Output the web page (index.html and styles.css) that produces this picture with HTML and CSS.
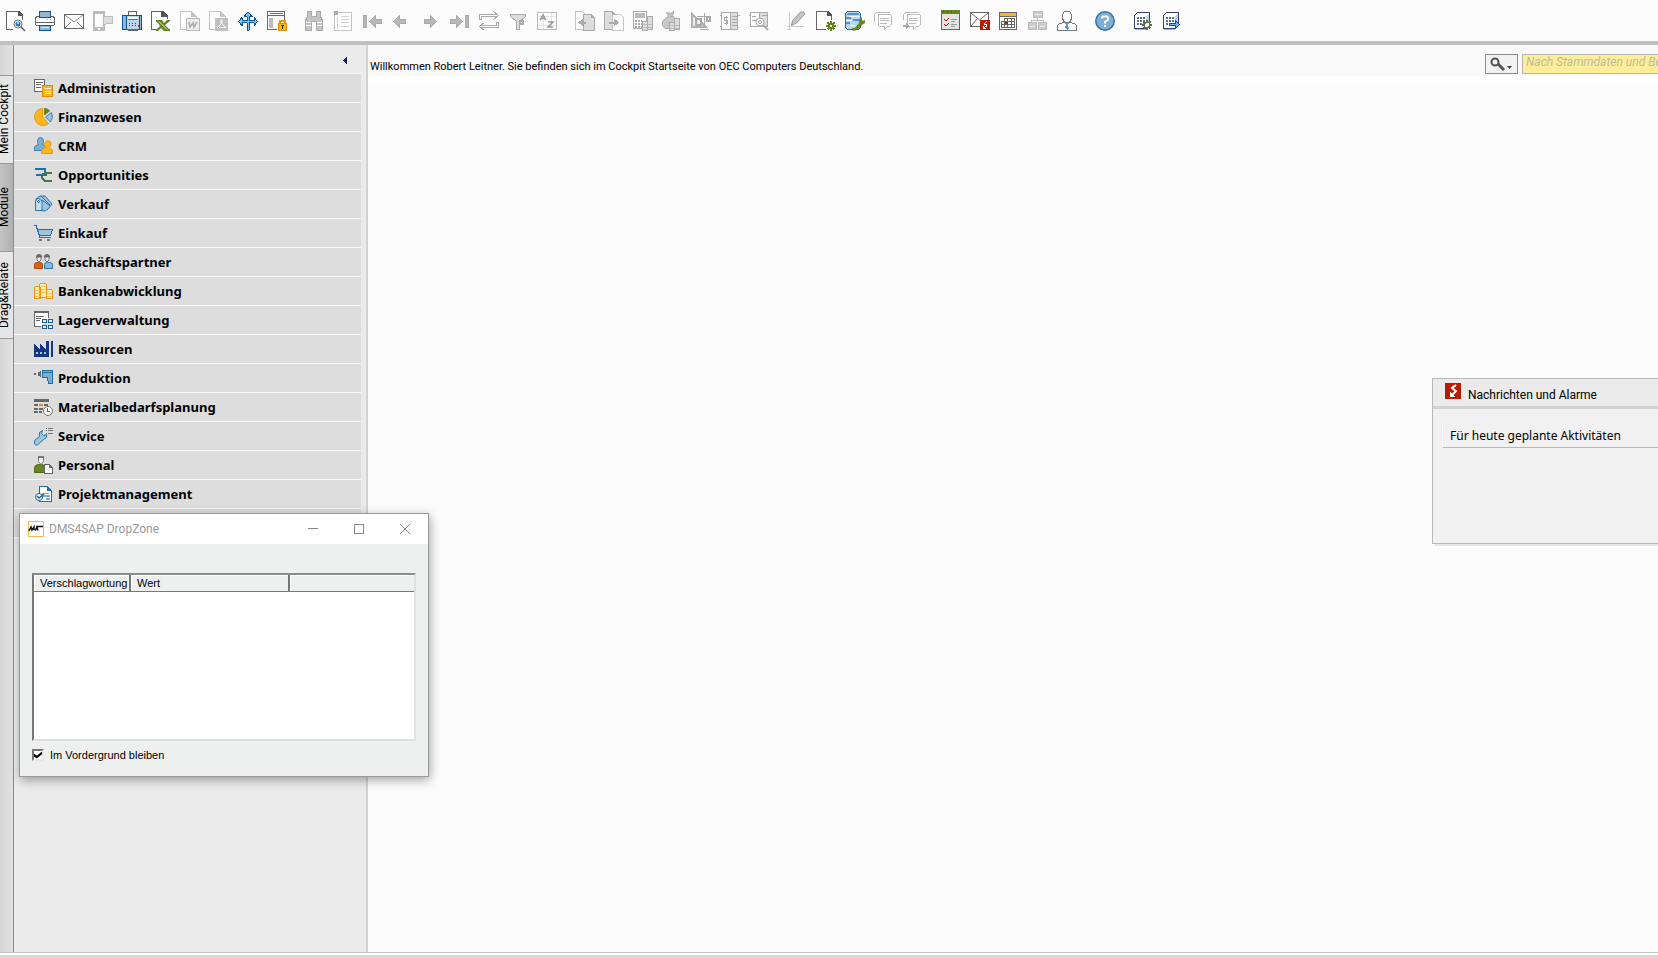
FILE: index.html
```
<!DOCTYPE html>
<html lang="de">
<head>
<meta charset="utf-8">
<title>OEC Computers Deutschland</title>
<link rel="stylesheet" href="styles.css">
</head>
<body>
<header class="toolbar" role="toolbar" aria-label="Werkzeugleiste">
  <div class="group">
    <button class="tool" aria-label="Vorschau"><svg viewBox="0 0 20 20"><path fill="#fff" stroke="#666" d="M7 18.500H.5V.5h12l4 4V9"/><path fill="#555" d="M12 0v5h5V4l-4-4z"/><circle class="smooth" cx="12" cy="13" r="4" fill="#fff" stroke="#777"/><circle class="smooth" cx="12" cy="13" r="2.500" fill="#1f78c0"/><path fill="#9fd0f2" d="M11 11h2v2h-2z"/><path class="smooth" stroke="#555" stroke-width="1.500" d="M15 16l4 4"/></svg></button>
    <button class="tool" aria-label="Drucken"><svg viewBox="0 0 20 20"><path fill="#fff" stroke="#666" d="M1.500 5.500h17l1 2v6l-1 1h-17l-1-1v-6z"/><path stroke="#666" d="M1 11.500h18"/><path fill="#8fb8d8" stroke="#0b5795" d="M4.500.5h11v6h-11zM4.500 14.500h11v5h-11z"/><path stroke="#b9936c" stroke-dasharray="1 2" d="M12 8.500h6"/><path stroke="#cfe3f1" d="M6 16.500h8"/></svg></button>
    <button class="tool" aria-label="E-Mail"><svg viewBox="0 0 20 20"><path fill="#fff" stroke="#666" d="M.5 3.500h19v14H.5z"/><path class="smooth" fill="none" stroke="#888" d="M1 4l9 7 9-7M1 17l6-6M19 17l-6-6"/></svg></button>
    <button class="tool" aria-label="SMS"><svg viewBox="0 0 20 20"><path fill="#fff" stroke="#bbb" stroke-width="2" d="M1 1h10v18H1z"/><path fill="#bbb" d="M0 0h12v3H0zM0 16h12v4H0z"/><path fill="#fff" d="M5 17h2v2H5z"/><path fill="#ddd" stroke="#bbb" d="M10.500 5.500h9v7h-6l-3 2z"/></svg></button>
    <button class="tool" aria-label="Fax"><svg viewBox="0 0 20 20"><path fill="#8fb8d8" stroke="#0b5795" d="M.5 4.500h19v14H.5z"/><path fill="#fff" stroke="#666" d="M6.500.5h8v4h-8z"/><path fill="#b9d6ea" stroke="#0b5795" d="M4.500 4.500h13v14h-13z"/><path fill="#fff" d="M6 6h10v3H6z"/><path stroke="#3d80b3" d="M6 8.500h10"/><path stroke="#0b5795" stroke-dasharray="1 2" d="M7 12.500h9M7 14.500h8"/><path fill="#c33" d="M16 14h1v2h-1z"/><path fill="#fff" stroke="#666" d="M6 18.500h9v1H6z"/></svg></button>
    <button class="tool" aria-label="Excel-Export"><svg viewBox="0 0 20 20"><path fill="#fff" stroke="#666" d="M7 18.500H.5V.5h11l5 5V8"/><path fill="#555" d="M10 0v6h7V5l-5-5z"/><path class="smooth" fill="#66851c" d="M5 9h6l2 3 3-3h3v1l-5 4 4 4h1v2h-6l-3-3-3 3H5v-1l4-4-3-4H5z"/><path class="smooth" stroke="#e6efc4" d="M8 10.500l8 8"/></svg></button>
    <button class="tool" aria-label="Word-Export"><svg viewBox="0 0 20 20"><path fill="#fff" stroke="#c4c4c4" d="M6 18.500H.5V.5h11l5 5V8"/><path fill="#c4c4c4" d="M11 0v6h6V5z"/><path fill="#ececec" stroke="#b8b8b8" d="M6.500 7.500h13v12h-13z"/><path class="smooth" fill="none" stroke="#aaa" stroke-width="1.500" d="M9 11l1 5 3-4 1 4 3-5"/></svg></button>
    <button class="tool" aria-label="PDF-Export"><svg viewBox="0 0 20 20"><path fill="#fff" stroke="#c4c4c4" d="M6 18.500H.5V.5h11l5 5V8"/><path fill="#c4c4c4" d="M11 0v6h6V5z"/><path fill="#c0c0c0" d="M6 7h13v13H6z"/><path class="smooth" fill="none" stroke="#fff" d="M8 17l4-4V9h1v4l4 3.500h-7"/></svg></button>
    <button class="tool" aria-label="Anwendung starten"><svg viewBox="0 0 20 20"><path fill="#7fc0ee" stroke="#0b5795" stroke-linejoin="round" d="M10 1l4 4.500h-3v4h5V6.500l3.500 4-3.500 4v-3h-5v7.500H9v-7.500H4v3l-3.500-4L4 6.500v3h5v-4H6z"/></svg></button>
    <button class="tool" aria-label="Sperren"><svg viewBox="0 0 20 20"><path fill="#fff" stroke="#666" d="M10 18.500H.5V.5h17V9"/><path stroke="#666" d="M0 4.500h18M3 2.500h13"/><path fill="#bbb" d="M2 7h4v10H2z"/><path fill="none" stroke="#e59a17" stroke-width="2" d="M13 12v-2h5v2"/><path fill="#fbb61c" stroke="#e08c00" d="M11.500 12.500h8v7h-8z"/><path fill="#234" d="M14 14h3v1h-1v3h-1v-3h-1z"/></svg></button>
  </div>
  <div class="group">
    <button class="tool" aria-label="Suchen"><svg viewBox="0 0 20 20"><path fill="#c4c4c4" stroke="#aaa" d="M2.500.5h4v5h5v-5h4v5l2 4v10h-6v-9h-5v9h-6v-10l2-4z"/><path stroke="#fff" d="M1 11.500h5M12 11.500h5M1 14.500h5M12 14.500h5"/></svg></button>
    <button class="tool" aria-label="Formular"><svg viewBox="0 0 20 20"><path fill="#fff" stroke="#c4c4c4" d="M.5 1.500h17v18H.5z"/><path fill="#aaa" d="M0 0h4v4H0z"/><path stroke="#d0d0d0" d="M7 5.500h8M7 8.500h8M7 11.500h8M7 15.500h8M3.500 6v12"/></svg></button>
    <button class="tool" aria-label="Erster Datensatz"><svg viewBox="0 0 20 20"><path fill="#b8b8b8" stroke="#aaa" d="M.5 4.500h3v12h-3zM6.500 10.500l6-6v4h6v4h-6v4z"/></svg></button>
    <button class="tool" aria-label="Vorheriger Datensatz"><svg viewBox="0 0 20 20"><path fill="#b8b8b8" stroke="#aaa" d="M1.500 10.500l6-6v4h6v4h-6v4z"/></svg></button>
    <button class="tool" aria-label="Nächster Datensatz"><svg viewBox="0 0 20 20"><path fill="#b8b8b8" stroke="#aaa" d="M15.500 10.500l-6-6v4h-6v4h6v4z"/></svg></button>
    <button class="tool" aria-label="Letzter Datensatz"><svg viewBox="0 0 20 20"><path fill="#b8b8b8" stroke="#aaa" d="M15.500 4.500h3v12h-3zM12.500 10.500l-6-6v4h-6v4h6v4z"/></svg></button>
    <button class="tool" aria-label="Aktualisieren"><svg viewBox="0 0 20 20"><path fill="none" stroke="#aaa" d="M.5 8.500v-5h17M.5 8.500h2v-3h15M14.500.5l5 4-5 4M19.500 11.500v5h-17M19.500 11.500h-2v3h-15M5.500 11.500l-5 4 5 4"/></svg></button>
    <button class="tool" aria-label="Filter"><svg viewBox="0 0 20 20"><path fill="#ddd" stroke="#aaa" d="M2.500 3.500h15v2l-6 5v8h-3v-8l-6-5z"/><path fill="#eee" stroke="#aaa" stroke-width="1.500" d="M12 10h3v3h-3z"/></svg></button>
    <button class="tool" aria-label="Sortieren"><svg viewBox="0 0 20 20"><path fill="#fff" stroke="#bbb" d="M.5 1.500h19v17H.5z"/><path stroke="#e4e4e4" d="M1 5.500h18M1 14.500h18M6.500 2v16M14.500 2v16"/><path class="smooth" fill="none" stroke="#999" stroke-width="1.500" d="M3 9l3-5 3 5M4 7.500h4M11 11h5l-5 5h5"/></svg></button>
  </div>
  <div class="group">
    <button class="tool" aria-label="Basisbeleg"><svg viewBox="0 0 20 20"><path fill="#fff" stroke="#c4c4c4" d="M.5.500h7l3 3v15H.5z"/><path fill="#ddd" stroke="#aaa" d="M8.500 3.500h8l3 3v13h-11z"/><path fill="#aaa" d="M3 11.500l5-4v3h3v2H8v3zM16 3v4h4z"/></svg></button>
    <button class="tool" aria-label="Zielbeleg"><svg viewBox="0 0 20 20"><path fill="#ddd" stroke="#aaa" d="M.5.500h8l3 3v15H.5z"/><path fill="#fff" stroke="#c4c4c4" d="M8.500 3.500h8l3 3v13h-11z"/><path fill="#aaa" d="M15 11.500l-5-4v3H5v2h5v3zM8 0v4h4z"/></svg></button>
    <button class="tool" aria-label="Rohertrag"><svg viewBox="0 0 20 20"><path fill="#fff" stroke="#aaa" d="M.5.500h13v17H.5z"/><path fill="#bbb" d="M2 2h10v5H2z"/><path stroke="#aaa" stroke-width="2" stroke-dasharray="2 1" d="M2 10h7M2 13h7M2 16h7"/><path fill="#ddd" stroke="#aaa" d="M14.500 5.500h5v13h-5zM9.500 10.500h5v9h-5z"/><path stroke="#bbb" d="M10 13.500h9M10 16.500h9"/></svg></button>
    <button class="tool" aria-label="Zahlungsmittel"><svg viewBox="0 0 20 20"><path class="smooth" fill="#c8c8c8" stroke="#aaa" d="M4.500 1.500l4 1 3-2v3l-3 2h3l3 5v7H3l-2.500-3v-4l4-4 2-1z"/><path fill="#ddd" stroke="#aaa" d="M12.500 7.500h5v11h-5zM7.500 11.500h5v8h-5z"/><path stroke="#bbb" d="M8 14.500h9M8 17.500h9"/></svg></button>
    <button class="tool" aria-label="Saldo"><svg viewBox="0 0 20 20"><path fill="#eee" stroke="#b0b0b0" stroke-width="2" d="M1 3l14 13H1z"/><path fill="none" stroke="#aaa" d="M5.500 5.500h14M13.500 2v15M9 18.500h9"/><path fill="#eee" stroke="#aaa" stroke-width="1.500" d="M5 8h5v6H5zM16 6h3v4h-3z"/></svg></button>
    <button class="tool" aria-label="Buchungsjournal"><svg viewBox="0 0 20 20"><path fill="#fff" stroke="#aaa" d="M1.500 1.500h9v17h-9zM0 4.500h2M0 15.500h2"/><path fill="#ddd" stroke="#aaa" d="M10.500 1.500h7v17h-7zM18 4.500h2"/><path stroke="#aaa" d="M12 5.500h5M12 8.500h5M12 11.500h5M12 14.500h5"/><path fill="none" stroke="#aaa" d="M8 6.500H4.500v3h3v3H4M6 5v9"/></svg></button>
    <button class="tool" aria-label="Journalvorschau"><svg viewBox="0 0 20 20"><path fill="#fff" stroke="#aaa" d="M1.500 1.500h9v14h-9zM0 4.500h2"/><path fill="#ddd" stroke="#aaa" d="M10.500 1.500h8v14h-8z"/><path stroke="#aaa" d="M3 5.500h4M3 9.500h4M13 4.500h6"/><circle class="smooth" cx="11" cy="11" r="4" fill="#fff" stroke="#aaa"/><circle class="smooth" cx="11" cy="11" r="1.500" fill="#fff" stroke="#aaa"/><path class="smooth" stroke="#aaa" stroke-width="2" d="M14 14l5 5"/></svg></button>
  </div>
  <div class="group">
    <button class="tool" aria-label="Layout bearbeiten"><svg viewBox="0 0 20 20"><path stroke="#ccc" d="M2.500 1v18M0 15.500h17M0 18.500h4"/><path class="smooth" fill="#c4c4c4" stroke="#999" d="M4.500 14.500l1-5 8-8.500h3l1.500 2-8.500 9z"/></svg></button>
    <button class="tool" aria-label="Formulareinstellungen"><svg viewBox="0 0 20 20"><path fill="#fff" stroke="#666" d="M10 18.500H.5V.5h11l4 4V9"/><path fill="#555" d="M11 0v5h5V4l-4-4z"/><path stroke="#66851c" stroke-width="2" d="M15 10v10M10 15h10M11.500 11.500l7 7M18.500 11.500l-7 7"/><circle cx="15" cy="15" r="3.500" fill="#66851c"/><path fill="#e6efc4" d="M14 14h2v2h-2z"/></svg></button>
    <button class="tool" aria-label="Abfrage-Manager"><svg viewBox="0 0 20 20"><path fill="#b9d6ea" stroke="#1c6faf" d="M.5 2.500l2-2h11l2 2v14l-2 2h-11l-2-2z"/><path fill="#4f97ce" d="M2 2h12v2H2zM1 6h5v2H1zM8 8h7v2H8zM1 11h4v2H1z"/><path stroke="#fff" d="M4 5.500h11M1 9.500h6M5 14.500h5"/><path class="smooth" fill="#66851c" d="M7 17h3l4-5V9l3-3v3l2 1 1-2v4l-3 2-5 5-4 1z"/></svg></button>
    <button class="tool" aria-label="Nachricht"><svg viewBox="0 0 20 20"><path fill="#fff" stroke="#bbb" d="M.5 11V3.500l2-2h13"/><path fill="#fff" stroke="#bbb" d="M4.500 3.500h12l1 1v9l-2 2h-2l-3 3v-3h-5l-1-1z"/><path stroke="#bbb" d="M6 7.500h9M6 9.500h9M6 12.500h7"/></svg></button>
    <button class="tool" aria-label="Nachricht senden"><svg viewBox="0 0 20 20"><path fill="#fff" stroke="#bbb" d="M.5 9V3.500l2-2h13"/><path fill="#fff" stroke="#bbb" d="M4.500 3.500h12l1 1v9l-2 2h-2l-3 3v-3h-5l-1-1z"/><path stroke="#bbb" d="M6 7.500h9M6 9.500h9M6 12.500h7"/><path fill="#aaa" d="M0 14h3v-2l3 3-3 3v-2H0z"/></svg></button>
  </div>
  <div class="group">
    <button class="tool" aria-label="Aktivitäten"><svg viewBox="0 0 20 20"><path fill="#e4e4e4" stroke="#666" d="M.5.500h18v18H.5z"/><path fill="#66851c" d="M0-1h19v4H0z"/><path stroke="#42600a" stroke-dasharray="1 3" d="M2 0h16"/><path stroke="#999" d="M10 8.500h6M10 10.500h4M10 13.500h6M10 15.500h4"/><path class="smooth" fill="none" stroke="#c41200" d="M3 8l2 2 3-3M3 13l2 2 3-3"/></svg></button>
    <button class="tool" aria-label="Nachrichten und Alarme"><svg viewBox="0 0 20 20"><path fill="#fff" stroke="#666" d="M.5 1.500h18v14H.5z"/><path class="smooth" fill="none" stroke="#666" d="M1 2l8.500 7L18 2M1 15l6-7"/><path fill="#b91c00" d="M10 9h10v10H10z"/><path fill="none" stroke="#fff" d="M16.500 10l-2 3h2v2l-3 2M13.500 15v2h2"/></svg></button>
    <button class="tool" aria-label="Kalender"><svg viewBox="0 0 20 20"><path fill="#fff" stroke="#666" d="M.5 1.500h17v17H.5z"/><path fill="#fbb61c" d="M1 2h16v3H1z"/><path fill="none" stroke="#666" d="M0 5.500h18M5.500 7.500h10v9M2.500 10.500h13M2.500 13.500h13M2.500 16.500h13M2.500 10v7M5.500 7v10M8.500 7v10M12.500 7v10"/><path fill="#b91c00" d="M6 11h3v2H6z"/></svg></button>
    <button class="tool" aria-label="Organigramm"><svg viewBox="0 0 20 20"><path fill="#ccc" stroke="#bbb" d="M5.500.500h9v6h-9zM.5 11.500h8v7h-8zM10.500 11.500h8v7h-8z"/><path fill="none" stroke="#bbb" d="M9.500 7v2M3.500 11V9.500h12V11"/><path stroke="#eee" d="M7 3.500h6M2 15.500h5M12 15.500h5"/></svg></button>
    <button class="tool" aria-label="Benutzer"><svg viewBox="0 0 20 20"><path fill="#fff" stroke="#777" d="M.5 19.500v-5l2-2 5-1h4l6 1 2 2v5z"/><path fill="#fff" stroke="#777" d="M7.500.500h5l2 3v4l-2 4h-5l-2-4v-4z"/><path fill="#5b9bc8" d="M8 12h4l-1 2 1 3-2 2-2-2 1-3z"/></svg></button>
  </div>
  <div class="group">
    <button class="tool" aria-label="Hilfe"><svg class="smooth" viewBox="0 0 20 20"><circle cx="10" cy="10" r="9.200" fill="#82aed0" stroke="#2a74ab" stroke-width="1.500"/><path fill="none" stroke="#fff" stroke-width="2" d="M7 7.500V6.500L8 5.500h4l1 1v2L10 11v1.500M10 14v2"/></svg></button>
  </div>
  <div class="group">
    <button class="tool" aria-label="Servereinstellungen"><svg viewBox="0 0 20 20"><path fill="#fff" stroke="#33417e" d="M1.500 4.500l3-3h12v12l-3 4h-12z"/><path fill="#bcd3ec" d="M13 5l3-3v11l-3 4z"/><path stroke="#5b7099" stroke-width="2" stroke-dasharray="2 1" d="M4 7h8M4 10h8M4 13h8"/><path stroke="#c9a0d8" d="M2 18.500h11"/><path stroke="#5e6a4a" stroke-width="1.500" d="M14 9v10M9 14h10M10.500 10.500l7 7M17.500 10.500l-7 7"/><circle cx="14" cy="14" r="2.500" fill="#fff" stroke="#5e6a4a"/></svg></button>
    <button class="tool" aria-label="Server wechseln"><svg viewBox="0 0 20 20"><path fill="#fff" stroke="#33417e" d="M1.500 4.500l3-3h12v12l-3 4h-12z"/><path fill="#bcd3ec" d="M13 5l3-3v11l-3 4z"/><path stroke="#5b7099" stroke-width="2" stroke-dasharray="2 1" d="M4 7h8M4 10h8M4 13h8"/><path stroke="#c9a0d8" d="M2 18.500h11"/><path fill="#6fb2ef" stroke="#1553a0" d="M7.500 12.500h6v-3l4 4-4 4v-3h-6z"/></svg></button>
  </div>
</header>

<div class="workspace">
  <nav class="tabs" aria-label="Ansichten">
    <button class="tab">Mein Cockpit</button>
    <button class="tab tab-active">Module</button>
    <button class="tab">Drag&amp;Relate</button>
  </nav>

  <aside class="sidebar">
    <div class="sidebar-head"><button class="collapse" aria-label="Einklappen"><svg viewBox="0 0 4 7"><path fill="#17205f" d="M4 0v7L0 4V3z"/></svg></button></div>
    <ul class="modules">
      <li><a class="module" href="#"><svg viewBox="0 0 19 19"><path fill="#fff" stroke="#666" d="M.5.500h10v12H.5z"/><path stroke="#666" d="M2 3.500h7M2 5.500h5M2 8.500h5"/><path fill="#fbb61c" stroke="#e08c00" d="M8.500 6.500h10v11h-10z"/><path stroke="#fff" d="M11 9.500h6M11 12.500h6M11 14.500h6"/></svg>Administration</a></li>
      <li><a class="module" href="#"><svg class="smooth" viewBox="0 0 19 19"><path fill="#fbb61c" stroke="#e59a17" d="M8.500.500a8.500 8.500 0 1 0 6 15l-6-6.500z"/><path fill="#66851c" d="M10 0q4 0 6 3l-5 4h-1z"/><path fill="#9fc4e0" stroke="#3d80b3" d="M17.500 4.500q2.500 5-1 9.500l-5-5z"/></svg>Finanzwesen</a></li>
      <li><a class="module" href="#"><svg class="smooth" viewBox="0 0 19 19"><path fill="#7fadd2" stroke="#3d80b3" d="M.5 13.500V10q0-1 4-2.500-1-1.500-1-4Q4 .5 6.500.5t3 3q0 2.500-1 4 3 1 3 2.500v3.500z"/><path fill="#fbb61c" stroke="#e59a17" d="M7.500 16.500V14q0-2 3-2.500l1-1q-2-3-.5-5t3-1.500q2.500 0 3 2t-1.500 4.500l1 1q2 .5 2 2.500v2.500z"/></svg>CRM</a></li>
      <li><a class="module" href="#"><svg viewBox="0 0 19 19"><path fill="none" stroke="#1c6faf" stroke-width="2" d="M1 3h10v4h3M2 9h11"/><path fill="none" stroke="#4b7a38" stroke-width="2" d="M18 7h-7L8 9v3l3 3h7"/><path stroke="#1c6faf" stroke-width="2" d="M2 9h8"/></svg>Opportunities</a></li>
      <li><a class="module" href="#"><svg class="smooth" viewBox="0 0 19 19"><path fill="#9fc4e0" stroke="#2a74ab" d="M2 4l4-3h5l7 8-4 5-3 2-9-1z"/><path fill="#c5ddee" stroke="#2a74ab" d="M1.500 6L4 3l4 3v9.500H1.500zM8 5l8 6M7 1l9 9"/><circle cx="4.500" cy="6.500" r="1" fill="#fff" stroke="#2a74ab"/></svg>Verkauf</a></li>
      <li><a class="module" href="#"><svg viewBox="0 0 19 19"><path fill="#9fc4e0" stroke="#1c6faf" d="M3.500 5.500h15l-2 6h-11z"/><path fill="none" stroke="#1c6faf" stroke-width="1.500" d="M0 1.500h2l4 12h11"/><path fill="none" stroke="#777" stroke-width="2" d="M5 16h3M13 16h3"/></svg>Einkauf</a></li>
      <li><a class="module" href="#"><svg class="smooth" viewBox="0 0 19 19"><path fill="#c96a12" stroke="#b04a10" d="M.5 15.500v-4q0-2 3-2h2q3 0 3 2v4z"/><path fill="#8fb8d8" stroke="#2a74ab" d="M10.500 15.500v-4q0-2 3-2h2q3 0 3 2v4z"/><path fill="#eee" stroke="#777" d="M3 4h4v3L5 9 3 7zM11 4h4v3l-2 2-2-2z"/><path fill="#666" d="M2 5V3q1-2 3-2t3 2v2L7 4H3zM10 5V3q1-2 3-2t3 2v2l-1-1h-4z"/></svg>Geschäftspartner</a></li>
      <li><a class="module" href="#"><svg viewBox="0 0 19 19"><path fill="#fbe9b0" stroke="#e59a17" d="M5.500 2.500l1-1h5l1 1v13h-7zM.5 5.500l1-1h4l1 1v11h-6zM12.500 8.500l1-1h4l1 1v8h-6z"/><path stroke="#f4c35c" d="M1 8.500h5M1 11.500h5M1 14.500h5M7 4.500h5M7 7.500h5M7 10.500h5M13 11.500h5M13 14.500h5"/></svg>Bankenabwicklung</a></li>
      <li><a class="module" href="#"><svg viewBox="0 0 19 19"><path fill="#fff" stroke="#666" d="M7 15.500H.5V.5h14V7"/><path stroke="#666" stroke-width="2" d="M0 1h15"/><path stroke="#666" d="M2 5.500h8M2 7.500h5M2 9.500h4"/><path fill="#e8f3fa" stroke="#1c5f8f" d="M8.500 8.500h4v3h-4zM14.500 8.500h4v3h-4zM8.500 14.500h4v3h-4zM14.500 14.500h4v3h-4z"/></svg>Lagerverwaltung</a></li>
      <li><a class="module" href="#"><svg viewBox="0 0 19 19"><path fill="#17357e" d="M0 17V4l6 5V4l6 5V1h3v16zM17 1h2v16h-2z"/><path fill="#9fc4e0" d="M2 12h2v2H2zM6 12h2v2H6zM10 12h2v2h-2z"/></svg>Ressourcen</a></li>
      <li><a class="module" href="#"><svg viewBox="0 0 19 19"><path fill="#666" d="M0 4h2v2H0zM4 3h2v4H4zM6 2h1v6H6z"/><path fill="#7fadd2" stroke="#1c6faf" d="M8.500 1.500h10v13h-4l-1-6h-5z"/><path stroke="#1c6faf" d="M9 3.500h9"/></svg>Produktion</a></li>
      <li><a class="module" href="#"><svg viewBox="0 0 19 19"><path fill="#666" d="M0 1h15v3H0z"/><path stroke="#666" stroke-width="2" stroke-dasharray="4 1" d="M0 7h15M0 11h9M0 14h8"/><path fill="#e08c2c" d="M5 6h4v2H5z"/><circle class="smooth" cx="14" cy="13" r="4.500" fill="#fff" stroke="#777"/><path fill="none" stroke="#666" d="M13.500 10v3.500H16"/></svg>Materialbedarfsplanung</a></li>
      <li><a class="module" href="#"><svg viewBox="0 0 19 19"><path class="smooth" fill="#9fc4e0" stroke="#2a74ab" d="M.5 16.500v-3l5-4v-4l3-2-1 3 2 2 3-1v3l-3 2-6 5.500h-2z"/><path stroke="#777" d="M12 1.500h1M14 1.500h5M12 3.500h1M14 3.500h5M12 6.500h1M14 6.500h5"/></svg>Service</a></li>
      <li><a class="module" href="#"><svg viewBox="0 0 19 19"><path class="smooth" fill="#66851c" stroke="#4f6b12" d="M.5 16.500v-5q0-2.500 4-3h4q2 .5 2 3v5z"/><path class="smooth" fill="#eee" stroke="#777" d="M4.500 1.500h5v4l-2.500 3-2.500-3z"/><path fill="#777" d="M4 0h6v2H4z"/><path fill="#fff" stroke="#666" d="M10.500 8.500h5l3 3v6h-8z"/><path fill="#666" d="M15 8v4h4z"/></svg>Personal</a></li>
      <li><a class="module" href="#"><svg viewBox="0 0 19 19"><path fill="#fff" stroke="#1c6faf" d="M5.500 1.500h8l4 4v11h-12z"/><path fill="#1c6faf" d="M13 1v5h5z"/><path stroke="#e59a17" d="M8 8.500h7"/><path stroke="#7fadd2" stroke-width="2" d="M8 11h8M12 14h4"/><circle class="smooth" cx="5" cy="12" r="3.500" fill="#fff" stroke="#1c5f8f"/><path class="smooth" fill="none" stroke="#1c5f8f" stroke-width="1.500" d="M3 11l2 2 5-4"/></svg>Projektmanagement</a></li>
      <li class="module-blank"></li>
    </ul>
  </aside>

  <main class="cockpit">
    <div class="cockpit-head">
      <p class="welcome">Willkommen Robert Leitner. Sie befinden sich im Cockpit Startseite von OEC Computers Deutschland.</p>
      <form class="search">
        <button class="search-button" type="button" aria-label="Suchen"><svg class="smooth" viewBox="0 0 24 14"><circle cx="5" cy="5" r="3.500" fill="none" stroke="#555" stroke-width="2"/><path stroke="#555" stroke-width="3" d="M8 7l6 6"/><path fill="#444" d="M17 9h5l-2.500 3z"/></svg></button>
        <input class="search-input" type="text" aria-label="Suchbegriff" placeholder="Nach Stammdaten und Belegen suchen">
      </form>
    </div>
    <section class="alerts">
      <h2 class="alerts-title"><svg viewBox="0 0 16 16"><path fill="#b91c00" d="M0 0h16v16H0z"/><path class="smooth" fill="none" stroke="#fff" stroke-width="2" d="M11 2L7 5l4 3-4 4"/><path fill="#fff" d="M5 9l5 5H5z"/></svg>Nachrichten und Alarme</h2>
      <p class="alerts-row">Für heute geplante Aktivitäten</p>
    </section>
  </main>
</div>
<footer class="statusbar"></footer>

<section class="dropzone" aria-label="DMS4SAP DropZone">
  <header class="titlebar">
    <svg viewBox="0 0 16 16"><path fill="#fff" stroke="#efb94f" d="M.5.500h15v15H.5z"/><path class="smooth" fill="none" stroke="#111" stroke-width="1.500" d="M1 10l2-4 1 3 2-3v3M7 9.500l2-3 1 3M8 5.500h7"/></svg>
    <span class="titlebar-text">DMS4SAP DropZone</span>
    <button class="caption" aria-label="Minimieren"><svg viewBox="0 0 10 10"><path stroke="#888" d="M0 4.500h10"/></svg></button>
    <button class="caption" aria-label="Maximieren"><svg viewBox="0 0 10 10"><path fill="none" stroke="#888" d="M.5.500h9v9h-9z"/></svg></button>
    <button class="caption" aria-label="Schließen"><svg class="smooth" viewBox="0 0 10 10"><path stroke="#888" d="M0 0l10 10M10 0L0 10"/></svg></button>
  </header>
  <div class="dropzone-body">
    <div class="list">
      <table class="list-table">
        <thead><tr><th class="col-key">Verschlagwortung</th><th class="col-value">Wert</th><th></th></tr></thead>
      </table>
    </div>
    <label class="stay"><input class="check" type="checkbox" checked>Im Vordergrund bleiben</label>
  </div>
</section>
</body>
</html>
```
FILE: styles.css
```
* { box-sizing: border-box; }
html, body { height: 100%; }
body {
  margin: 0;
  display: flex;
  flex-direction: column;
  overflow: hidden;
  position: relative;
  background: #fcfcfc;
  color: #000;
  font: 12px/16px Roboto, "Noto Sans", sans-serif;
}
button { margin: 0; padding: 0; border: 0; background: none; font: inherit; color: inherit; }
svg { display: block; flex: none; fill: none; shape-rendering: crispEdges; overflow: visible; }
.smooth { shape-rendering: auto; }

.toolbar {
  display: flex;
  gap: 18px;
  height: 45px;
  flex: none;
  padding: 11px 6px 0;
  border-bottom: 4px solid #c0c0c0;
}
.group { display: flex; gap: 9px; }
.tool, .tool svg { width: 20px; height: 20px; }

.workspace { flex: 1; display: flex; min-height: 0; }

.tabs {
  width: 14px;
  flex: none;
  display: flex;
  flex-direction: column;
  padding-top: 30px;
  border-right: 1px solid #8c8c8c;
  background: linear-gradient(90deg, #d6d6d6, #e2e2e2);
}
.tab {
  display: flex;
  align-items: center;
  justify-content: center;
  height: 88px;
  padding-left: 6px;
  border-bottom: 1px solid #999;
  background: #e6e6e6;
  writing-mode: vertical-rl;
  transform: rotate(180deg);
  white-space: nowrap;
}
.tab:last-child { border-top: 1px solid #999; }
.tab-active { background: linear-gradient(90deg, #b0b0b0, #c4c4c4); }

.sidebar {
  width: 354px;
  flex: none;
  padding-right: 5px;
  border-right: 2px solid #d2d2d2;
  background: #ebebeb;
}
.sidebar-head { display: flex; justify-content: flex-end; height: 28px; padding: 12px 14px 0 0; }
.collapse, .collapse svg { width: 4px; height: 7px; }
.modules { margin: 0; padding: 0; list-style: none; border-bottom: 1px solid #f6f6f6; }
.modules li { height: 29px; border-top: 1px solid #f6f6f6; background: #dddddd; }
.module {
  display: flex;
  align-items: center;
  gap: 5px;
  height: 28px;
  padding-left: 20px;
  color: #000;
  text-decoration: none;
  font-family: "Noto Sans", "Open Sans", sans-serif;
  font-size: 13px;
  font-weight: 700;
}
.module svg { width: 19px; height: 19px; }

.cockpit { flex: 1; min-width: 0; position: relative; }
.cockpit-head {
  display: flex;
  justify-content: space-between;
  height: 40px;
  border-bottom: 9px solid #fff;
  background: #f9f9f9;
}
.welcome { margin: 0; padding: 14px 0 0 2px; font-size: 11px; line-height: 16px; white-space: nowrap; }
.search { display: flex; gap: 4px; margin-top: 9px; height: 20px; }
.search-button { width: 33px; height: 20px; padding: 2px 4px; border: 1px solid #8c8c8c; background: #f2f2f2; }
.search-button svg { width: 24px; height: 14px; }
.search-input {
  width: 136px;
  height: 20px;
  padding: 0 0 4px 3px;
  border: 1px solid #b4b4b4;
  border-right: 0;
  border-radius: 0;
  background: #ffee99;
  font: italic 12px/14px Roboto, "Noto Sans", sans-serif;
}
.search-input::placeholder { color: #bdbaa0; opacity: 1; }

.alerts {
  position: absolute;
  top: 333px;
  right: 0;
  width: 226px;
  height: 166px;
  border: 1px solid #b8b8b8;
  border-right: 0;
  background: #f1f1f1;
  box-shadow: 3px 2px 0 #e6e6e6;
}
.alerts-title {
  display: flex;
  gap: 7px;
  height: 30px;
  margin: 0;
  padding: 4px 0 0 12px;
  border-bottom: 3px solid #d2d2d2;
  background: #ebebeb;
  font-size: 12px;
  font-weight: 400;
  line-height: 24px;
}
.alerts-title svg { width: 16px; height: 16px; }
.alerts-row {
  margin: 15px 0 0 9px;
  height: 24px;
  padding-left: 7px;
  border-left: 1px solid #fff;
  border-bottom: 1px solid #b8b8b8;
  font-family: "Noto Sans", "Open Sans", sans-serif;
  line-height: 24px;
}

.statusbar { flex: none; height: 6px; border-top: 1px solid #c4c4c4; background: linear-gradient(#fff 2px, #d8d8d8 2px); }

.dropzone {
  position: absolute;
  left: 19px;
  top: 513px;
  width: 410px;
  border: 1px solid #999;
  background: #eef0f0;
  box-shadow: 1px 3px 10px rgba(0, 0, 0, .35);
}
.titlebar { display: flex; align-items: center; height: 30px; padding-left: 8px; background: #fff; color: #999; }
.titlebar > svg { width: 16px; height: 16px; }
.titlebar-text { flex: 1; padding-left: 5px; }
.caption { width: 46px; height: 30px; display: flex; align-items: center; justify-content: center; }
.caption svg { width: 10px; height: 10px; }
.dropzone-body { padding: 29px 12px 14px; font: 11px/14px "Liberation Sans", Arial, sans-serif; }
.list {
  height: 168px;
  border: 2px solid;
  border-color: #8c8c8c #e0e0e0 #e0e0e0 #777;
  background: #fff;
}
.list-table { width: 100%; table-layout: fixed; border-collapse: separate; border-spacing: 0; }
.list-table th {
  height: 17px;
  padding: 0 0 0 6px;
  border: solid #777;
  border-width: 0 2px 1px 0;
  background: #eef0f0;
  box-shadow: inset 1px 1px 0 #fff;
  font-weight: 400;
  text-align: left;
  white-space: nowrap;
}
.list-table th:last-child { border-right: 0; }
.col-key { width: 97px; }
.col-value { width: 159px; }
.stay { display: flex; align-items: center; gap: 6px; margin-top: 7px; }
.check {
  appearance: none;
  width: 12px;
  height: 12px;
  margin: 0;
  border: 2px solid;
  border-color: #777 #e6e6e6 #e6e6e6 #777;
  background: #fff;
  display: grid;
  place-items: center;
}
.check:checked::before {
  content: "";
  width: 8px;
  height: 7px;
  background: #000;
  clip-path: polygon(0 30%, 35% 60%, 100% 0, 100% 40%, 35% 100%, 0 70%);
}
```
